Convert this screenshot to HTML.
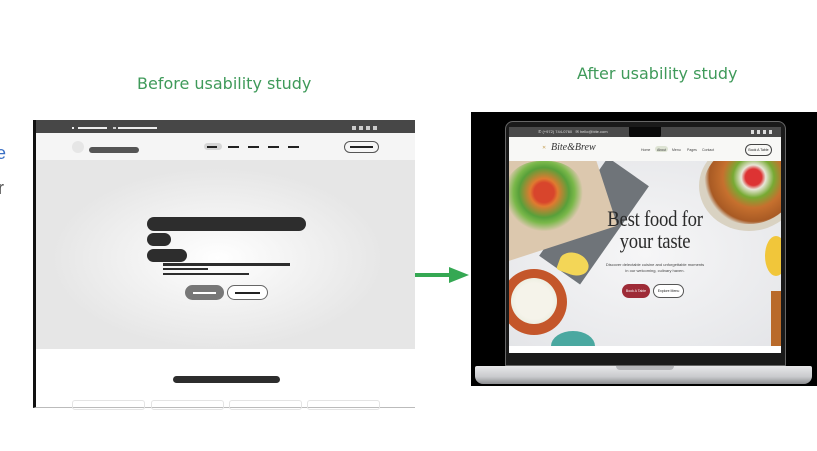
<!DOCTYPE html>
<html><head><style>
*{margin:0;padding:0;box-sizing:border-box}
body{width:817px;height:451px;background:#fff;position:relative;overflow:hidden;font-family:"Liberation Sans",sans-serif}
.a{position:absolute}
.t{color:#3f9a5a;font-size:16px;font-family:"DejaVu Sans","Liberation Sans",sans-serif;white-space:nowrap}
.pill{position:absolute;background:#333;border-radius:10px}
</style></head><body>
<div class="a" style="left:-4px;top:143px;color:#3a6fc4;font-size:18px">e</div>
<div class="a" style="left:-2px;top:178px;color:#555;font-size:18px">r</div>
<div class="a t" style="left:137px;top:74px">Before usability study</div>
<div class="a t" style="left:577px;top:64px">After usability study</div>

<!-- before mockup -->
<div class="a" style="left:33px;top:120px;width:382px;height:288px;background:#fff;border-left:3px solid #111;border-bottom:1px solid #bbb"></div>
<div class="a" style="left:36px;top:120px;width:379px;height:13px;background:#474747"></div>
<div class="a" style="left:72px;top:127px;width:2px;height:2px;background:#eee"></div>
<div class="a" style="left:78px;top:127px;width:29px;height:2px;background:#eee"></div>
<div class="a" style="left:113px;top:127px;width:3px;height:2px;background:#ccc"></div>
<div class="a" style="left:118px;top:127px;width:39px;height:2px;background:#eee"></div>
<div class="a" style="left:352px;top:126px;width:28px;height:4px;background:repeating-linear-gradient(90deg,#ccc 0 4px,transparent 4px 7px)"></div>
<div class="a" style="left:36px;top:133px;width:379px;height:27px;background:#f5f5f5"></div>
<div class="a" style="left:72px;top:141px;width:12px;height:12px;border-radius:50%;background:#e6e6e6"></div>
<div class="pill" style="left:89px;top:147px;width:50px;height:6px;background:#555"></div>
<div class="a" style="left:204px;top:143px;width:18px;height:7px;border-radius:4px;background:#d6d6d6"></div>
<div class="a" style="left:207px;top:146px;width:10px;height:2px;background:#222"></div>
<div class="a" style="left:228px;top:146px;width:76px;height:2px;background:repeating-linear-gradient(90deg,#222 0 11px,transparent 11px 20px)"></div>
<div class="a" style="left:344px;top:141px;width:35px;height:12px;border:1px solid #555;border-radius:7px"></div>
<div class="a" style="left:350px;top:146px;width:23px;height:2px;background:#222"></div>
<div class="a" style="left:36px;top:160px;width:379px;height:189px;background:radial-gradient(ellipse 55% 60% at 48% 52%,#fff 0%,#f2f2f2 40%,#e6e6e6 80%)"></div>
<div class="pill" style="left:147px;top:217px;width:159px;height:14px;background:#2d2d2d"></div>
<div class="pill" style="left:147px;top:233px;width:24px;height:13px;background:#2d2d2d"></div>
<div class="pill" style="left:147px;top:249px;width:40px;height:13px;background:#2d2d2d"></div>
<div class="a" style="left:163px;top:263px;width:127px;height:3px;background:#2d2d2d"></div>
<div class="a" style="left:163px;top:268px;width:45px;height:2px;background:#2d2d2d"></div>
<div class="a" style="left:163px;top:273px;width:86px;height:2px;background:#2d2d2d"></div>
<div class="a" style="left:185px;top:285px;width:39px;height:15px;border-radius:8px;background:#777"></div>
<div class="a" style="left:193px;top:292px;width:23px;height:2px;background:#fff"></div>
<div class="a" style="left:227px;top:285px;width:41px;height:15px;border-radius:8px;border:1px solid #666;background:#fff"></div>
<div class="a" style="left:235px;top:292px;width:25px;height:2px;background:#222"></div>
<div class="pill" style="left:173px;top:376px;width:107px;height:7px;background:#2d2d2d"></div>
<div class="a" style="left:72px;top:400px;width:73px;height:10px;border:1px solid #e4e4e4;border-radius:3px"></div>
<div class="a" style="left:151px;top:400px;width:73px;height:10px;border:1px solid #e4e4e4;border-radius:3px"></div>
<div class="a" style="left:229px;top:400px;width:73px;height:10px;border:1px solid #e4e4e4;border-radius:3px"></div>
<div class="a" style="left:307px;top:400px;width:73px;height:10px;border:1px solid #e4e4e4;border-radius:3px"></div>

<!-- arrow -->
<div class="a" style="left:415px;top:273px;width:36px;height:4px;background:#35a853"></div>
<div class="a" style="left:449px;top:267px;width:0;height:0;border-top:8px solid transparent;border-bottom:8px solid transparent;border-left:20px solid #35a853"></div>

<!-- after: laptop -->
<div class="a" style="left:471px;top:112px;width:346px;height:274px;background:#000"></div>
<div class="a" style="left:505px;top:121px;width:281px;height:245px;border-radius:8px 8px 0 0;background:#1a1a1a;border:1px solid #666"></div>
<div class="a" style="left:509px;top:127px;width:272px;height:226px;background:#fff"></div>
<div class="a" style="left:509px;top:127px;width:272px;height:10px;background:#4a4a4a"></div>
<div class="a" style="left:629px;top:127px;width:32px;height:11px;background:#0a0a0a;border-radius:0 0 3px 3px"></div>
<div class="a" style="left:538px;top:129px;font-size:4px;color:#ddd;white-space:nowrap">✆ (+972) 744-0760 &nbsp; ✉ hello@bite.com</div>
<div class="a" style="left:751px;top:130px;width:24px;height:4px;background:repeating-linear-gradient(90deg,#ddd 0 3px,transparent 3px 6px)"></div>
<div class="a" style="left:509px;top:137px;width:272px;height:24px;background:#f8f8f6"></div>
<div class="a" style="left:542px;top:145px;font-size:5px;color:#c9a35a">✕</div>
<div class="a" style="left:551px;top:142px;font-family:'Liberation Serif',serif;font-style:italic;font-size:10px;color:#333">Bite&amp;Brew</div>
<div class="a" style="left:641px;top:148px;font-size:3.5px;color:#444;white-space:nowrap">Home</div>
<div class="a" style="left:655px;top:146px;width:13px;height:6px;border-radius:3px;background:#dde3d3"></div>
<div class="a" style="left:657px;top:148px;font-size:3.5px;color:#444">About</div>
<div class="a" style="left:672px;top:148px;font-size:3.5px;color:#444">Menu</div>
<div class="a" style="left:687px;top:148px;font-size:3.5px;color:#444">Pages</div>
<div class="a" style="left:702px;top:148px;font-size:3.5px;color:#444">Contact</div>
<div class="a" style="left:745px;top:144px;width:27px;height:12px;border:1px solid #444;border-radius:6px;font-size:3.5px;line-height:10px;text-align:center;color:#222;white-space:nowrap">Book A Table</div>
<div class="a" style="left:509px;top:161px;width:272px;height:185px;background:radial-gradient(ellipse at 50% 50%,#f6f6f7,#e4e5e8);overflow:hidden">
  <div class="a" style="left:60px;top:0px;width:50px;height:120px;background:#6f7479;transform:rotate(35deg)"></div>
  <div class="a" style="left:-20px;top:-20px;width:115px;height:105px;background:#dcc8ae;transform:rotate(-18deg)"></div>
  <div class="a" style="left:-5px;top:0px;width:80px;height:70px;border-radius:45%;background:radial-gradient(circle at 50% 45%,#d8452c 0 18%,#e07a30 25%,#58a03a 45%,#7ab84a 55%,rgba(120,180,80,0) 70%)"></div>
  <div class="a" style="left:-8px;top:108px;width:66px;height:66px;border-radius:50%;background:#c4562a"></div>
  <div class="a" style="left:2px;top:117px;width:46px;height:46px;border-radius:50%;background:radial-gradient(circle,#f5f3ea 0 55%,#dfe6d2 100%)"></div>
  <div class="a" style="left:50px;top:92px;width:30px;height:22px;border-radius:50% 50% 50% 10%;background:#f3d657;transform:rotate(20deg)"></div>
  <div class="a" style="left:190px;top:-20px;width:100px;height:90px;border-radius:50%;background:#d9d2c2"></div>
  <div class="a" style="left:195px;top:-15px;width:90px;height:78px;border-radius:50%;background:radial-gradient(circle at 55% 40%,#d33 0 12%,#e8e6d8 18%,#7a3 30%,#c6702e 45%,#a85a24 65%,transparent 72%)"></div>
  <div class="a" style="left:256px;top:75px;width:22px;height:40px;border-radius:50%;background:#f1c63a"></div>
  <div class="a" style="left:262px;top:130px;width:14px;height:55px;background:#b96a2a"></div>
  <div class="a" style="left:42px;top:170px;width:44px;height:30px;border-radius:50%;background:#4aa8a0"></div>
</div>
<div class="a" style="left:590px;top:208px;width:130px;font-family:'Liberation Serif',serif;font-size:22px;line-height:22px;color:#2b2b2b;text-align:center;white-space:nowrap;transform:scaleX(0.85);letter-spacing:-0.3px">Best food for<br>your taste</div>
<div class="a" style="left:597px;top:262px;width:116px;font-size:4px;line-height:6px;color:#444;text-align:center;white-space:nowrap">Discover delectable cuisine and unforgettable moments<br>in our welcoming, culinary haven.</div>
<div class="a" style="left:622px;top:284px;width:28px;height:14px;border-radius:7px;background:#9e2b37;font-size:3.5px;color:#fff;text-align:center;line-height:14px;white-space:nowrap">Book A Table</div>
<div class="a" style="left:653px;top:284px;width:31px;height:14px;border-radius:7px;border:1px solid #555;background:#fff;font-size:3.5px;color:#222;text-align:center;line-height:12px;white-space:nowrap">Explore Menu</div>
<div class="a" style="left:509px;top:346px;width:272px;height:7px;background:#fff"></div>
<div class="a" style="left:475px;top:366px;width:337px;height:18px;border-radius:2px 2px 8px 8px;background:linear-gradient(#e8e8ea,#c9cacd 60%,#8d8e91)"></div>
<div class="a" style="left:616px;top:366px;width:58px;height:4px;border-radius:0 0 4px 4px;background:#b5b6b9"></div>
</body></html>
